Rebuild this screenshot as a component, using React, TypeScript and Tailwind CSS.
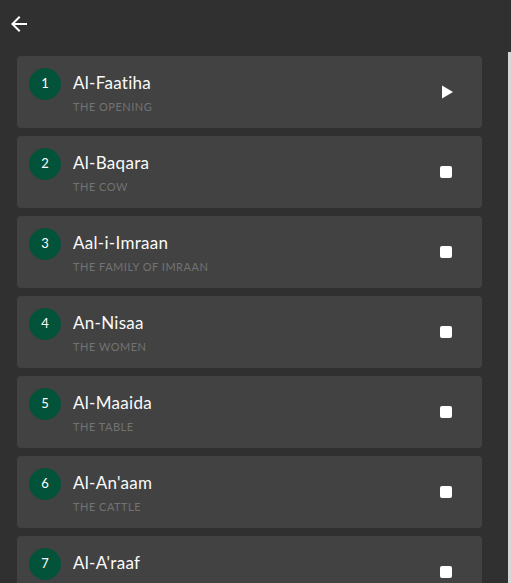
import React from "react";

const surahs = [
  { n: 1, name: "Al-Faatiha", en: "THE OPENING", playing: true },
  { n: 2, name: "Al-Baqara", en: "THE COW" },
  { n: 3, name: "Aal-i-Imraan", en: "THE FAMILY OF IMRAAN" },
  { n: 4, name: "An-Nisaa", en: "THE WOMEN" },
  { n: 5, name: "Al-Maaida", en: "THE TABLE" },
  { n: 6, name: "Al-An'aam", en: "THE CATTLE" },
  { n: 7, name: "Al-A'raaf", en: "" },
];

export default function App() {
  return (
    <div
      className="relative w-[511px] h-[583px] overflow-hidden bg-[#303030]"
      style={{ fontFamily: "Lato, 'Noto Sans', sans-serif" }}
    >
      <div className="h-[48px] flex items-center pl-[7px]">
        <svg width="24" height="24" viewBox="0 0 24 24" className="fill-white">
          <path d="M20 11H7.83l5.59-5.59L12 4l-8 8 8 8 1.41-1.41L7.83 13H20v-2z" />
        </svg>
      </div>
      <div className="flex flex-col gap-2 pt-2 pl-[17px] w-[482px]">
        {surahs.map((s) => (
          <div
            key={s.n}
            className="h-[72px] shrink-0 rounded bg-[#424242] flex items-start pl-3 pr-[24px]"
          >
            <div className="mt-3 w-8 h-8 rounded-full bg-[#02533a] flex items-center justify-center text-[13px] text-white shrink-0">
              {s.n}
            </div>
            <div className="ml-3 flex-1 flex flex-col">
              <div className="mt-[16px] h-[22px] leading-[22px] text-[17px] tracking-[0.3px] text-[#fafafa]">
                {s.name}
              </div>
              {s.en && (
                <div className="mt-[5px] h-[16px] leading-[16px] text-[11px] text-[#727272] tracking-[0.5px]">
                  {s.en}
                </div>
              )}
            </div>
            <div className="self-center w-6 h-6 flex items-center justify-center">
              {s.playing ? (
                <svg width="24" height="24" viewBox="0 0 24 24" className="fill-white">
                  <path d="M8 5.5L8 18.5L19 12z" />
                </svg>
              ) : (
                <div className="w-3 h-3 rounded-[2px] bg-white" />
              )}
            </div>
          </div>
        ))}
      </div>
      <div className="absolute right-0 top-[52px] bottom-0 w-[3px] bg-[#d6d6d6]" />
    </div>
  );
}
